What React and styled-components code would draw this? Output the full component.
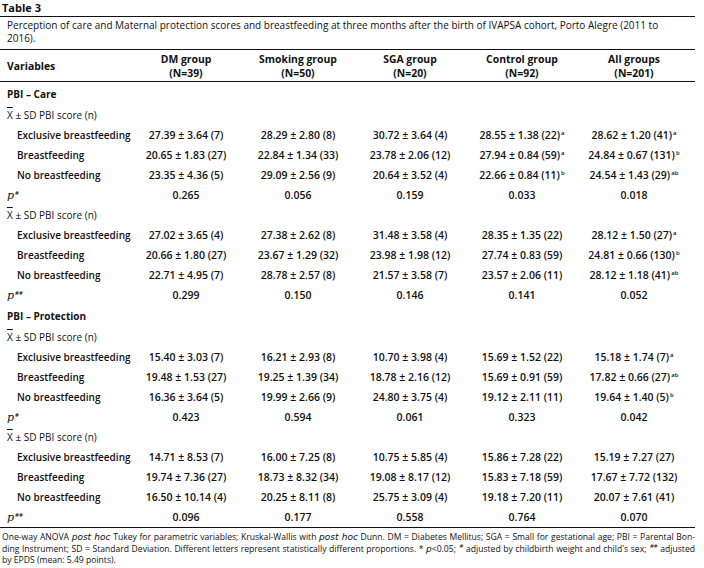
import React from 'react';
import styled, { createGlobalStyle } from 'styled-components';

const GlobalStyle = createGlobalStyle`
  body {
    margin: 0;
    background: #fff;
    color: #111;
    font-family: "Open Sans", "Liberation Sans", sans-serif;
  }
`;

const Page = styled.div`
  width: 695px;
`;

const Title = styled.div`
  height: 16px;
  line-height: 16px;
  padding-left: 2px;
  font-size: 11px;
  font-weight: 700;
  border-bottom: 1px solid #111;
`;

const Caption = styled.div`
  padding: 2px 0 4px 7px;
  font-size: 10px;
  line-height: 13px;
  border-bottom: 1px solid #111;
`;

const Row = styled.div`
  display: grid;
  grid-template-columns: 130px repeat(5, 112px) 1fr;
  align-items: center;
  height: ${props => props.$height || 20}px;
  font-size: 10px;
`;

const HeadRow = styled(Row)`
  height: 31px;
  font-size: 10.4px;
  font-weight: 700;
  line-height: 14px;
  border-bottom: 1px solid #111;
`;

const Label = styled.div`
  padding-left: ${props => (props.$indent ? 17 : 7)}px;
  font-weight: ${props => props.$weight || 600};
  white-space: nowrap;
`;

const Cell = styled.div`
  text-align: center;
  font-size: ${props => props.$size || 10.5}px;
  font-weight: ${props => props.$weight || 600};
  white-space: nowrap;
`;

const Sup = styled.sup`
  font-size: 6px;
  vertical-align: 4px;
  line-height: 0;
  margin-left: 1px;
`;

const Mean = styled.span`
  text-decoration: overline;
`;

const P = styled.i`
  font-family: "DejaVu Serif", "Liberation Serif", serif;
  font-size: 11px;
  font-weight: 400;
`;

const Body = styled.div`
  border-bottom: 1px solid #111;
`;

const Footnote = styled.div`
  padding: 4px 0 0 2px;
  font-size: 8.6px;
  line-height: 11.5px;
`;

const FootLine = styled.div`
  white-space: nowrap;
  text-align: ${props => (props.$justify ? 'justify' : 'left')};
  text-align-last: ${props => (props.$justify ? 'justify' : 'left')};
`;

const Em = styled.i`
  font-family: "DejaVu Sans", sans-serif;
  font-size: 9px;
`;

const groups = [
  ['DM group', '(N=39)'],
  ['Smoking group', '(N=50)'],
  ['SGA group', '(N=20)'],
  ['Control group', '(N=92)'],
  ['All groups', '(N=201)']
];

const sections = [
  {
    title: 'PBI – Care',
    blocks: [
      {
        p: '#',
        rows: [
          ['Exclusive breastfeeding', ['27.39 ± 3.64 (7)'], ['28.29 ± 2.80 (8)'], ['30.72 ± 3.64 (4)'], ['28.55 ± 1.38 (22)', 'a'], ['28.62 ± 1.20 (41)', 'a']],
          ['Breastfeeding', ['20.65 ± 1.83 (27)'], ['22.84 ± 1.34 (33)'], ['23.78 ± 2.06 (12)'], ['27.94 ± 0.84 (59)', 'a'], ['24.84 ± 0.67 (131)', 'b']],
          ['No breastfeeding', ['23.35 ± 4.36 (5)'], ['29.09 ± 2.56 (9)'], ['20.64 ± 3.52 (4)'], ['22.66 ± 0.84 (11)', 'b'], ['24.54 ± 1.43 (29)', 'ab']]
        ],
        pv: ['0.265', '0.056', '0.159', '0.033', '0.018']
      },
      {
        p: '##',
        rows: [
          ['Exclusive breastfeeding', ['27.02 ± 3.65 (4)'], ['27.38 ± 2.62 (8)'], ['31.48 ± 3.58 (4)'], ['28.35 ± 1.35 (22)'], ['28.12 ± 1.50 (27)', 'a']],
          ['Breastfeeding', ['20.66 ± 1.80 (27)'], ['23.67 ± 1.29 (32)'], ['23.98 ± 1.98 (12)'], ['27.74 ± 0.83 (59)'], ['24.81 ± 0.66 (130)', 'b']],
          ['No breastfeeding', ['22.71 ± 4.95 (7)'], ['28.78 ± 2.57 (8)'], ['21.57 ± 3.58 (7)'], ['23.57 ± 2.06 (11)'], ['28.12 ± 1.18 (41)', 'ab']]
        ],
        pv: ['0.299', '0.150', '0.146', '0.141', '0.052']
      }
    ]
  },
  {
    title: 'PBI – Protection',
    blocks: [
      {
        p: '#',
        rows: [
          ['Exclusive breastfeeding', ['15.40 ± 3.03 (7)'], ['16.21 ± 2.93 (8)'], ['10.70 ± 3.98 (4)'], ['15.69 ± 1.52 (22)'], ['15.18 ± 1.74 (7)', 'a']],
          ['Breastfeeding', ['19.48 ± 1.53 (27)'], ['19.25 ± 1.39 (34)'], ['18.78 ± 2.16 (12)'], ['15.69 ± 0.91 (59)'], ['17.82 ± 0.66 (27)', 'ab']],
          ['No breastfeeding', ['16.36 ± 3.64 (5)'], ['19.99 ± 2.66 (9)'], ['24.80 ± 3.75 (4)'], ['19.12 ± 2.11 (11)'], ['19.64 ± 1.40 (5)', 'b']]
        ],
        pv: ['0.423', '0.594', '0.061', '0.323', '0.042']
      },
      {
        p: '##',
        rows: [
          ['Exclusive breastfeeding', ['14.71 ± 8.53 (7)'], ['16.00 ± 7.25 (8)'], ['10.75 ± 5.85 (4)'], ['15.86 ± 7.28 (22)'], ['15.19 ± 7.27 (27)']],
          ['Breastfeeding', ['19.74 ± 7.36 (27)'], ['18.73 ± 8.32 (34)'], ['19.08 ± 8.17 (12)'], ['15.83 ± 7.18 (59)'], ['17.67 ± 7.72 (132)']],
          ['No breastfeeding', ['16.50 ± 10.14 (4)'], ['20.25 ± 8.11 (8)'], ['25.75 ± 3.09 (4)'], ['19.18 ± 7.20 (11)'], ['20.07 ± 7.61 (41)']]
        ],
        pv: ['0.096', '0.177', '0.558', '0.764', '0.070']
      }
    ]
  }
];

const Block = ({ block }) => (
  <>
    <Row>
      <Label $weight={400}>
        <Mean>X</Mean> ± SD PBI score (n)
      </Label>
    </Row>
    {block.rows.map(([name, ...cells]) => (
      <Row key={name}>
        <Label $indent>{name}</Label>
        {cells.map(([value, mark], i) => (
          <Cell key={i}>
            {value}
            {mark && <Sup>{mark}</Sup>}
          </Cell>
        ))}
      </Row>
    ))}
    <Row>
      <Label>
        <P>p</P>
        <Sup>{block.p}</Sup>
      </Label>
      {block.pv.map((v, i) => (
        <Cell key={i}>{v}</Cell>
      ))}
    </Row>
  </>
);

export default function App() {
  return (
    <Page>
      <GlobalStyle />
      <Title>Table 3</Title>
      <Caption>
        Perception of care and Maternal protection scores and breastfeeding at three months after the birth of IVAPSA cohort, Porto Alegre (2011 to
        <br />
        2016).
      </Caption>
      <HeadRow>
        <Label $weight={700}>Variables</Label>
        {groups.map(([name, n]) => (
          <Cell key={name} $weight={700} $size={10.4}>
            {name}
            <br />
            {n}
          </Cell>
        ))}
      </HeadRow>
      <Body>
        {sections.map((section, si) => (
          <React.Fragment key={section.title}>
            <Row $height={si === 0 ? 23 : 22}>
              <Label $weight={700}>{section.title}</Label>
            </Row>
            {section.blocks.map((block, bi) => (
              <Block key={bi} block={block} />
            ))}
          </React.Fragment>
        ))}
      </Body>
      <Footnote>
        <FootLine $justify>
          One-way ANOVA <Em>post hoc</Em> Tukey for parametric variables; Kruskal-Wallis with <Em>post hoc</Em> Dunn. DM = Diabetes Mellitus; SGA = Small for gestational age; PBI = Parental Bon-
        </FootLine>
        <FootLine $justify>
          ding Instrument; SD = Standard Deviation. Different letters represent statistically different proportions. * <Em>p</Em>&lt;0.05; <Sup>#</Sup> adjusted by childbirth weight and child's sex; <Sup>##</Sup> adjusted
        </FootLine>
        <FootLine>by EPDS (mean: 5.49 points).</FootLine>
      </Footnote>
    </Page>
  );
}
